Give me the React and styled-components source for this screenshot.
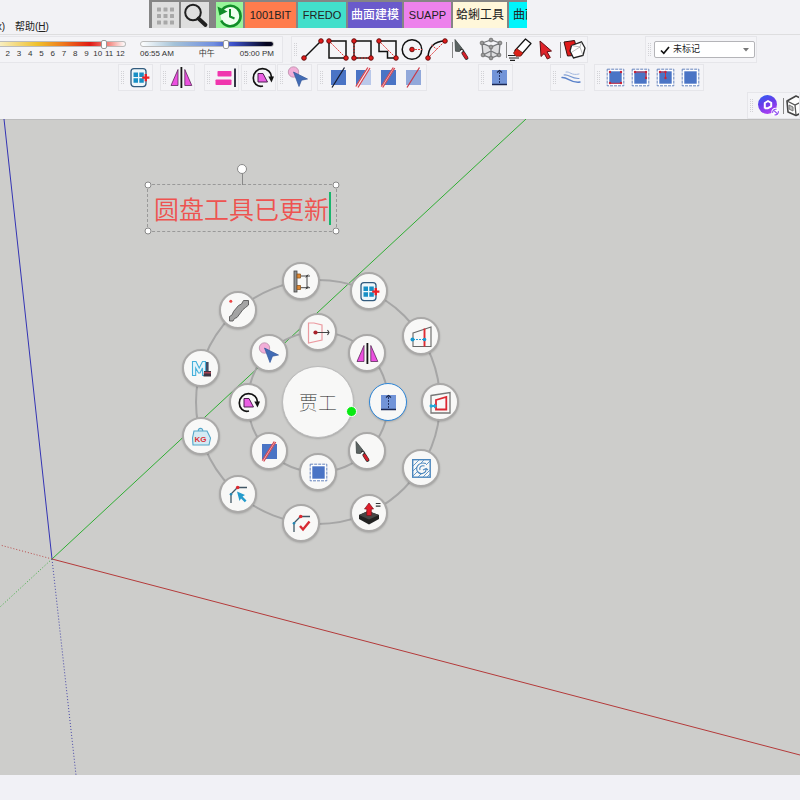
import React from "react";
import styled, { createGlobalStyle, css } from "styled-components";

const GlobalStyle = createGlobalStyle`
  *, *::before, *::after { box-sizing: border-box; }
  html, body { margin: 0; }
  body {
    font-family: "Liberation Sans", "Noto Sans CJK SC", sans-serif;
    color: #222;
    background: #f1f1f5;
    overflow: hidden;
  }
  button, input, select { font: inherit; color: inherit; margin: 0; }
`;

/* ---------- layout ---------- */

const Window = styled.div`
  display: grid;
  grid-template-rows: auto 1fr auto;
  grid-template-columns: minmax(0, 1fr);
  min-height: 100vh;
`;

const Header = styled.header`
  background: #f2f2f5;
  overflow: hidden;
`;

const TitleRow = styled.div`
  display: flex;
  align-items: flex-start;
  height: 35px;
  border-bottom: 1px solid #dededf;
`;

const Menu = styled.nav`
  display: flex;
  width: 149px;
  padding-top: 19px;
`;

const MenuItem = styled.button`
  display: flex;
  justify-content: flex-end;
  width: ${(p) => p.$width};
  margin-right: 10px;
  padding: 0;
  border: 0;
  background: none;
  overflow: hidden;
  white-space: nowrap;
  font-size: 10px;
  line-height: 15px;
`;

const TabStrip = styled.div`
  display: flex;
  gap: 2px;
  width: 378px;
  padding: 2px 0 0 3px;
  background: #858585;
  overflow: hidden;
`;

const Tab = styled.button`
  display: flex;
  flex: none;
  align-items: center;
  justify-content: center;
  width: ${(p) => p.$width}px;
  height: 26px;
  margin-right: ${(p) => p.$after || 0}px;
  padding: 0;
  border: 0;
  background: ${(p) => p.$color};
  color: ${(p) => p.$ink || "#222"};
  font-weight: ${(p) => (p.$ink ? 500 : 400)};
  font-size: ${(p) => (p.$cjk ? 12 : 11)}px;
  line-height: 16px;
  white-space: nowrap;
`;

const ToolRow = styled.div`
  display: flex;
  height: 28px;
  padding-top: 1px;
`;

const Group = styled.div`
  display: flex;
  flex: none;
  align-items: center;
  height: 27px;
  margin-left: ${(p) => p.$gap || 0}px;
  border: 1px solid #e6e6ea;
  background: #f4f4f7;
  ${(p) => p.$docked && css`
    width: 53px;
    margin-left: auto;
    overflow: hidden;
  `}
`;

const Grip = styled.span`
  flex: none;
  width: 4px;
  height: 14px;
  margin: 0 2px;
  background-image: linear-gradient(#d2d2d6 1px, transparent 1px);
  background-size: 100% 2px;
  mask-image: linear-gradient(to right, #000 1px, transparent 1px);
  mask-size: 2px 100%;
`;

const ToolButton = styled.button`
  display: flex;
  flex: none;
  width: 25px;
  height: 25px;
  padding: 0;
  border: 0;
  background: none;
`;

const Divider = styled.span`
  flex: none;
  width: 1px;
  height: 16px;
  margin: 0 1px 0 2px;
  background: #888;
`;

const ShadowGroup = styled(Group)`
  align-items: flex-start;
  width: 283px;
  gap: 14px;
  padding-top: 4px;
  border-left: 0;
`;

const SliderField = styled.label`
  display: flex;
  flex-direction: column;
  gap: 2px;
  width: ${(p) => p.$width}px;
  font-size: 8px;
  line-height: 10px;
`;

const Slider = styled.input`
  appearance: none;
  display: block;
  width: 100%;
  height: 6px;
  border: 1px solid #bbb;
  border-left-width: ${(p) => (p.$open ? 0 : 1)}px;
  border-radius: ${(p) => (p.$open ? "0 3px 3px 0" : "3px")};
  background: linear-gradient(to right, ${(p) => p.$colors});
  &::-webkit-slider-thumb {
    appearance: none;
    width: 6px;
    height: 9px;
    border: 1px solid #999;
    border-radius: 2px;
    background: #fff;
  }
`;

const MonthLabels = styled.span`
  display: grid;
  grid-template-columns: repeat(11, 1fr);
  padding-left: 2px;
  text-align: center;
  white-space: nowrap;
  color: #333;
`;

const TimeLabels = styled.span`
  display: flex;
  justify-content: space-between;
  white-space: nowrap;
  color: #333;
`;

const TagField = styled.label`
  display: flex;
  align-items: center;
  width: 101px;
  height: 17px;
  margin-right: 1px;
  padding: 0 5px;
  border: 1px solid #b4b4b8;
  border-radius: 2px;
  background: #fff;
`;

const TagSelect = styled.select`
  appearance: none;
  flex: 1;
  min-width: 0;
  padding: 0 0 0 3px;
  border: 0;
  background: none;
  font-size: 9px;
  line-height: 15px;
`;

const Viewport = styled.main`
  position: relative;
  overflow: hidden;
  background: #cdcdcb;
  box-shadow: inset 0 1px 0 #bdbdbd;
`;

const Scene = styled.svg`
  position: absolute;
  inset: 0;
  width: 100%;
  height: 100%;
`;

const StatusBar = styled.footer`
  height: 25px;
  background: #f1f1f6;
`;

/* ---------- text annotation ---------- */

const TextBox = styled.div`
  position: absolute;
  left: 147px;
  top: 65px;
  display: flex;
  align-items: center;
  padding: 6px;
  border: 1px dashed #999;
`;

const TextInput = styled.input`
  width: 176px;
  height: 34px;
  padding: 0;
  border: 0;
  outline: 0;
  background: none;
  color: #ee5350;
  font-family: "Noto Sans CJK SC", sans-serif;
  font-weight: 350;
  font-size: 25px;
  line-height: 34px;
`;

const Caret = styled.span`
  position: absolute;
  right: 5px;
  top: 7px;
  width: 2px;
  height: 33px;
  background: #18b56c;
`;

const Knob = styled.span`
  position: absolute;
  left: ${(p) => p.$x};
  top: ${(p) => p.$y};
  width: 7px;
  height: 7px;
  transform: translate(-50%, -50%);
  border: 1px solid #888;
  border-radius: 50%;
  background: #fff;
`;

const RotateKnob = styled(Knob)`
  width: 10px;
  height: 10px;
  &::after {
    content: "";
    position: absolute;
    left: 4px;
    top: 9px;
    width: 1px;
    height: 11px;
    background: #888;
  }
`;

/* ---------- radial menu ---------- */

const Dial = styled.div`
  position: absolute;
  left: 318px;
  top: 283px;
`;

const Ring = styled.span`
  position: absolute;
  width: ${(p) => p.$radius * 2 + 2}px;
  height: ${(p) => p.$radius * 2 + 2}px;
  transform: translate(-50%, -50%);
  border: 2px solid #a6a6a6;
  border-radius: 50%;
`;

const Node = styled.button`
  position: absolute;
  display: flex;
  align-items: center;
  justify-content: center;
  width: 38px;
  height: 38px;
  padding: 0;
  transform: translate(-50%, -50%);
  border: ${(p) => (p.$active ? "1px solid #2d86d8" : "2px solid #aaa9a8")};
  border-radius: 50%;
  background: #f8f8f7;
  box-shadow: 0 1px 2px rgba(0, 0, 0, 0.18);
`;

const Hub = styled(Node)`
  width: 72px;
  height: 72px;
  border: 1px solid #bbb;
  font-family: "Noto Sans CJK SC", sans-serif;
  font-weight: 100;
  font-size: 19px;
  line-height: 28px;
`;

const HubDot = styled.span`
  position: absolute;
  left: 28px;
  top: 4px;
  width: 11px;
  height: 11px;
  border: 1px solid #fff;
  border-radius: 50%;
  background: #08ea12;
`;

/* ---------- icons ---------- */

const Svg = styled.svg`
  display: block;
  flex: none;
  overflow: visible;
`;

const Glyph = ({ children, size = 25, box = 25 }) => (
  <Svg width={size} height={size} viewBox={`0 0 ${box} ${box}`} fill="none" aria-hidden="true">
    {children}
  </Svg>
);

const Dots = ({ points, r = 2.3 }) =>
  points.map(([x, y]) => (
    <circle key={`${x}-${y}`} cx={x} cy={y} r={r} fill="#e01b1b" stroke="#5c0808" strokeWidth="0.9" />
  ));

const dash = { stroke: "#e03a3a", strokeWidth: 1, strokeDasharray: "2 1" };
const ink = { stroke: "#111", strokeWidth: 1.5 };
const BLUE = "#4a74c5";

const icons = {
  line: <><path d="M4 21L21 4" {...ink} /><Dots points={[[4, 21], [21, 4]]} /></>,
  rect: <><path d="M4 4H21V21H4z" {...ink} /><path d="M4 4L21 21" {...dash} /><Dots points={[[4, 4], [21, 21]]} /></>,
  rect3: <><path d="M4 4H21V21" {...ink} /><path d="M4 4V21H21" {...ink} /><path d="M4 4V21H21" {...dash} /><Dots points={[[4, 4], [4, 21], [21, 21]]} /></>,
  poly: <><path d="M4 4H21V21H12.5V14.5H4z" {...ink} /><path d="M4 4L21 21" {...dash} /><Dots points={[[4, 4], [21, 21]]} /></>,
  circle: <><circle cx="12" cy="12.5" r="9.8" {...ink} /><path d="M12 12.5H22" {...dash} /><Dots points={[[12, 12.5]]} /></>,
  arc: <><path d="M3 21C3 11 9 4 20 4" {...ink} /><path d="M3 21L20 4M6.5 8L12 12.5" {...dash} /><Dots points={[[3, 21], [20, 4]]} /></>,
  trowel: (
    <>
      <path d="M1 2.5L8.2 11.5L5.5 14.5L1.5 14.2z" fill="#5c6463" stroke="#3f4544" strokeWidth="0.8" />
      <path d="M6 12.5C9 12 10 13 9.5 15.5" stroke="#333" strokeWidth="1.3" />
      <path d="M9.3 16L12.5 21" stroke="#2b2b2b" strokeWidth="3.8" strokeLinecap="round" />
      <path d="M9.6 16.4L12.3 20.6" stroke="#d2202a" strokeWidth="2.8" strokeLinecap="round" />
    </>
  ),
  cube: (
    <>
      <path d="M3 6L12 10L21 6V18L12 21L3 18z" fill="#dedee0" />
      <path d="M12 3L3 6L12 10L21 6zM3 6L4 18L12 21L20 18L21 6M12 10V21M4 18L12 14L20 18" stroke="#77797c" strokeWidth="1.3" />
      {[[12, 3], [3, 6], [21, 6], [12, 10], [4, 18], [20, 18], [12, 21]].map(([x, y]) => (
        <circle key={`${x}${y}`} cx={x} cy={y} r="1.9" fill="#999" stroke="#666" strokeWidth="0.7" />
      ))}
    </>
  ),
  eraser: (
    <>
      <path d="M17.5 2L23 6.5L13 18L7 13.5z" fill="#fff" stroke="#111" strokeWidth="1.2" strokeLinejoin="round" />
      <path d="M8.6 11.5L15 16L12.5 19.2L8 19.2L5.5 16z" fill="#dd2118" stroke="#5c120c" strokeWidth="0.7" />
      <path d="M0 18.5H7M1 21H11M2 23.4H7" stroke="#222" strokeWidth="1.1" />
    </>
  ),
  arrow: <path d="M7 4L18.5 14L14 14.8L17.3 20.5L14.3 22L11.2 16.5L8 19.5z" fill="#e0232b" stroke="#641014" strokeWidth="1" />,
  box: (
    <>
      <path d="M2 5L12.5 3.5L13.5 7L12 18.5L5.5 19z" fill="#e01a1a" stroke="#39100f" strokeWidth="1" />
      <path d="M9.5 8.5L19.5 4.8L23 11L21 18.5L11.5 21L8 14z" fill="#fff" stroke="#222" strokeWidth="1.3" />
      <path d="M9.5 8.5L18 10L19.5 4.8M18 10L21 18.5M18 10L10 15" stroke="#8d8d8d" strokeWidth="0.6" />
    </>
  ),
  add: (
    <>
      <rect x="4" y="3.6" width="15" height="18" rx="3" fill="#eef7fb" stroke="#315b7e" strokeWidth="1.3" />
      <path d="M6.5 7.5h4.5v4.5H6.5zM12.3 7.5h4.5v4.5h-4.5zM6.5 13.3h4.5v4.5H6.5zM12.3 13.3h4.5v4.5h-4.5z" fill="#178fc5" />
      <path d="M18.8 9v7.2M15.2 12.6H22.4" stroke="#e92127" strokeWidth="2.4" />
    </>
  ),
  mirror: (
    <>
      <path d="M9 4.5V20.5H2zM15.8 4.5V20.5H22.8z" fill="#ec4fe0" stroke="#5b2b59" strokeWidth="0.8" />
      <path d="M12.4 2V23" stroke="#151515" strokeWidth="1.8" />
    </>
  ),
  align: (
    <>
      <rect x="4.5" y="6" width="14" height="5.5" rx="0.8" fill="#f036ae" />
      <rect x="2.5" y="14.5" width="16" height="5.5" rx="0.8" fill="#f036ae" />
      <path d="M22 3.5V22" stroke="#343746" strokeWidth="2" />
    </>
  ),
  rotate: (
    <>
      <path d="M13 21C7 22.5 3.3 18 3.3 13C3.3 7.5 7.5 3.7 12.5 3.7C17.5 3.7 21.5 7.5 21.5 12" stroke="#111" strokeWidth="1.7" />
      <path d="M18.3 11.5H24L21.5 17.5z" fill="#111" />
      <path d="M8 8.5H13L17.5 17H8z" fill="#ea5fe3" stroke="#4b2150" strokeWidth="1" />
    </>
  ),
  pick: (
    <>
      <circle cx="7.5" cy="7" r="5.2" fill="#f2aed8" stroke="#b98ba8" strokeWidth="0.8" />
      <path d="M7.5 7L21.5 14L15.5 15.2L13 21.5z" fill="#416bb5" stroke="#35579a" strokeWidth="0.7" />
    </>
  ),
  cut: <><rect x="5" y="5" width="15" height="15" fill={BLUE} /><path d="M18.5 2.5L6 22.5" stroke="#141a2e" strokeWidth="1.3" /></>,
  cutLeft: (
    <>
      <path d="M5 5H17L7.7 20H5z" fill={BLUE} /><path d="M17 5H20V20H7.7z" fill="#b9c8ea" />
      <path d="M18 2.5L6 22" stroke="#f5e6ec" strokeWidth="3" />
      <path d="M16.8 2.5L4.8 21.5M19 3L7 22.5" stroke="#d8404a" strokeWidth="1.2" />
    </>
  ),
  cutBoth: (
    <>
      <rect x="5" y="5" width="15" height="15" fill={BLUE} />
      <path d="M18 3L6 22" stroke="#e8bcc8" strokeWidth="2" />
      <path d="M17.2 2.5L5.2 21.5M18.8 3L6.8 22.5" stroke="#d5464f" strokeWidth="1.1" />
    </>
  ),
  cutFade: <><rect x="5" y="5" width="15" height="15" fill="#91a8da" /><path d="M18.5 2.5L6 22.5" stroke="#c93847" strokeWidth="1.3" /></>,
  lift: (
    <>
      <rect x="5" y="5" width="15" height="14.5" fill="#7294d8" />
      <path d="M5 19.5H20" stroke="#1b2854" strokeWidth="1.5" />
      <path d="M12.5 18V6" stroke="#243465" strokeDasharray="2 1" />
      <path d="M10 7.5L12.5 5.5L15 7.5" stroke="#182447" strokeWidth="1.1" />
    </>
  ),
  waves: (
    <g strokeLinecap="round">
      <path d="M7 7C11 6 12 11 20 9" stroke="#a4b9df" strokeWidth="1" />
      <path d="M5 10C10 9 12 14 20 13.5" stroke="#7898d2" strokeWidth="1.1" />
      <path d="M3 12.5C9 12 12 18.5 21 17" stroke="#5a82ca" strokeWidth="1.4" />
    </g>
  ),
  area: <><rect x="4.2" y="4.2" width="16.6" height="16.6" fill="#fff" stroke="#6583bd" strokeDasharray="3 1" /><rect x="6.3" y="6.3" width="12.4" height="12.4" fill={BLUE} /></>,
  spark: (
    <>
      <defs>
        <linearGradient id="sparkFill" x1="0" y1="0" x2="0.4" y2="1"><stop offset="0" stopColor="#2b62f5" /><stop offset="0.5" stopColor="#653de9" /><stop offset="1" stopColor="#a63ff2" /></linearGradient>
      </defs>
      <circle cx="11.5" cy="11.5" r="9.5" fill="url(#sparkFill)" />
      <path d="M8.8 15.5V10L12 8L15.2 9.8V13.3L12 15.2H8.8" stroke="#fff" strokeWidth="2" strokeLinejoin="round" />
      <circle cx="19.5" cy="19" r="4.2" fill="#fff" />
      <path d="M16.7 20A3 3 0 0 1 20.5 16.4M22.3 18A3 3 0 0 1 18.5 21.7M17.3 17L21.7 21" stroke="#9354ef" strokeWidth="1.1" />
    </>
  ),
  solid: (
    <>
      <path d="M2 8L11 3L20 7V18L11 22.5L3 19z" fill="#fff" stroke="#444" strokeWidth="1.6" strokeLinejoin="round" />
      <path d="M2 8L10 12L20 7M10 12L11 22" stroke="#555" strokeWidth="1.3" />
      <path d="M4 12L8 14V18L4 16z" stroke="#777" fill="#bbb" />
    </>
  ),
  search: <><circle cx="10" cy="9.5" r="7.8" stroke="#202020" strokeWidth="2" /><path d="M15.5 15.5L22.5 22" stroke="#202020" strokeWidth="3.8" strokeLinecap="round" /></>,
  history: (
    <>
      <circle cx="13" cy="12.5" r="9.5" fill="#f0fff0" />
      <path d="M4.5 8A10.2 10.2 0 1 1 4.2 17.5" stroke="#128d29" strokeWidth="2.6" />
      <path d="M0.5 3.5L2.5 12.5L10.5 8.5z" fill="#128d29" />
      <path d="M13 6V13.5L17.5 15.5" stroke="#128d29" strokeWidth="2" />
    </>
  ),
  apps: <g fill="#a8a8a8">{[0, 1, 2].map((r) => [0, 1, 2].map((c) => <rect key={`${r}${c}`} x={4 + c * 6.5} y={4.5 + r * 6.5} width="4" height="4" rx="0.5" />))}</g>,
  frame: (
    <>
      <path d="M3 5.5L22 2.5V23H3z" stroke="#777" strokeWidth="1.3" />
      <path d="M8 10L18.3 7V19.5H8z" stroke="#dc2832" strokeWidth="1.8" />
      <path d="M2 16H8" stroke="#24a9d8" strokeWidth="2" /><circle cx="3.2" cy="16" r="1.7" fill="#24a9d8" /><path d="M6 13.5L9.2 16L6 18.5z" fill="#24a9d8" />
    </>
  ),
  section: (
    <>
      <path d="M4 9L22 3V22.5H4z" stroke="#666" strokeWidth="1.1" />
      <path d="M15.5 4.5V22.5" stroke="#de2b31" strokeWidth="1.9" />
      <path d="M4 15.5H16" stroke="#2a9fd3" strokeDasharray="2 1" /><circle cx="3.5" cy="15.5" r="2" fill="#1697ce" /><circle cx="15.5" cy="15.5" r="1.8" fill="#1697ce" />
    </>
  ),
  dims: (
    <>
      <rect x="5" y="2" width="3" height="21" fill="#929292" stroke="#444" strokeWidth="0.8" />
      <path d="M8 5h3.5v4H8zM8 16.5h3.5v4H8z" fill="#df8833" stroke="#8b5520" strokeWidth="0.8" />
      <path d="M12 7H21M12 18.7H21M18 6V20M16.8 8.5L19.2 5.5M16.8 20.2L19.2 17.2" stroke="#333" strokeWidth="0.9" />
    </>
  ),
  moulding: (
    <>
      <circle cx="4.8" cy="3.3" r="1.5" fill="#ed4444" />
      <path d="M3.5 18.5V23H7L8.5 20.5L11 19.5L17 11.5L19.5 9.5L22.5 7V2.5H17.5L15.5 6L12.5 7.5L7.5 13.5L6 17z" fill="#a4a4a4" stroke="#575757" strokeWidth="0.9" />
    </>
  ),
  brand: (
    <>
      <path d="M3.5 19.5V5.5H7L10.2 12L13.5 5.5H16.5V19.5H13.5V12L11 17H9.5L6.7 12V19.5z" fill="#e3f4fb" stroke="#45b0da" strokeWidth="1.1" />
      <path d="M18.3 6V15" stroke="#414b64" strokeWidth="2.6" />
      <path d="M15 15H22V20.5H14.5z" fill="#3d3340" /><path d="M15 16.8H22" stroke="#c44858" strokeWidth="1.2" />
    </>
  ),
  weight: (
    <>
      <path d="M5 7H18L21.5 14L20 21H4L3.5 14zM9.5 7C8 3.5 15 3.5 13.5 7" fill="#d4eaf3" stroke="#52a5c8" strokeWidth="1.1" />
      <text x="5.5" y="18" fontSize="8" fontWeight="700" fill="#db3037" fontFamily="Liberation Sans">KG</text>
    </>
  ),
  path: <><path d="M5 21V12L11.5 5.5H21" stroke="#415766" strokeWidth="1.3" /><circle cx="11.7" cy="5.5" r="1.8" fill="#df2a32" /><circle cx="5" cy="12.3" r="1.3" fill="#2187b5" /></>,
  push: (
    <>
      <path d="M2 14L11 10L22 14V18L12 23.5L2 18z" fill="#222" /><path d="M2 14L12 18.5L22 14L11 10z" fill="#454545" />
      <path d="M9.8 14.5V8H7.5L12 2L16.5 8H14.3V14.5z" fill="#df1d2a" stroke="#7b1019" strokeWidth="0.7" />
      <path d="M18.8 2.5H23.5M18.8 5.2H23.5" stroke="#333" strokeWidth="1.2" />
    </>
  ),
  hatch: (
    <>
      <rect x="3.7" y="3.7" width="17.5" height="17.5" stroke="#4a86bd" strokeWidth="1.4" />
      <path d="M4 10L10 4M4 15L8 11M12 7L15 4M4 20L9 15M9 21L12 18M14 21L21 14M17 9L21 5M18 21L21 18" stroke="#6599c9" />
      <path d="M17 7.5C11 5.5 6.5 10 8 14.5C10 19.5 17.5 18 17 12.5L14 14M17 12.5L19 14M15.5 10C12 9 10 11.5 11 14" stroke="#4a86bd" strokeWidth="1.1" />
    </>
  ),
  pull: (
    <>
      <path d="M2.5 3H8L16 5V20L2.5 23z" stroke="#eb9aa0" strokeWidth="1.2" />
      <path d="M9 12.5H23M21.5 10L23 12.5L21.5 15" stroke="#444" strokeWidth="1.1" /><circle cx="9.5" cy="12.5" r="2.1" fill="#a9212b" />
    </>
  ),
};

icons.pathPick = <>{icons.path}<path d="M11 9.5L19 13L16.5 14.5L20.5 18.5L18.8 20.2L15 16.5L13.5 19z" fill="#249bcc" /></>;
icons.pathCheck = <>{icons.path}<path d="M11 15L14 18.5L20.5 10.5" stroke="#d72a32" strokeWidth="2.4" /></>;
icons.areaBottom = <>{icons.area}<path d="M7 18.3H18" stroke="#cb3145" /><Corners at={[[7, 7], [18, 7], [7, 18], [18, 18]]} /></>;
icons.areaTop = <>{icons.area}<path d="M7 7H18V13" stroke="#cb3145" /><Corners at={[[7, 7], [18, 7], [18, 13]]} /></>;
icons.areaMid = <>{icons.area}<path d="M7 7H12.5V13" stroke="#cb3145" /><Corners at={[[7, 7], [12.5, 7], [12.5, 13]]} /></>;

function Corners({ at }) {
  return at.map(([x, y]) => <circle key={`${x}-${y}`} cx={x} cy={y} r="1.2" fill="#c92338" />);
}

/* ---------- data ---------- */

const drawTools = [
  ["line", "直线"], ["rect", "矩形"], ["rect3", "旋转矩形"], ["poly", "多边形"], ["circle", "圆"], ["arc", "圆弧"], null,
  ["trowel", "抹刀"], ["cube", "晶格"], null, ["eraser", "擦除"], ["arrow", "选择"], null, ["box", "组件"],
];

const pluginGroups = [
  { gap: 118, tools: [["add", "添加"]] },
  { gap: 7, tools: [["mirror", "镜像"]] },
  { gap: 9, tools: [["align", "对齐"]] },
  { gap: 2, tools: [["rotate", "旋转"]] },
  { gap: 1, tools: [["pick", "拾取"]] },
  { gap: 5, tools: [["cut", "切割"], ["cutLeft", "单侧切割"], ["cutBoth", "双线切割"], ["cutFade", "淡化切割"]] },
  { gap: 51, tools: [["lift", "升高"]] },
  { gap: 37, tools: [["waves", "曲线"]] },
  { gap: 9, tools: [["areaBottom", "底边"], ["areaTop", "顶边"], ["areaMid", "中点"], ["area", "面域"]] },
];

const innerNodes = [["lift", "升高"], ["mirror", "镜像"], ["pull", "拉伸"], ["pick", "拾取"], ["rotate", "旋转"], ["cutBoth", "切割"], ["area", "面域"], ["trowel", "抹刀"]];
const outerNodes = [
  ["frame", "偏移"], ["section", "剖面"], ["add", "添加"], ["dims", "标注"], ["moulding", "线脚"], ["brand", "材质"],
  ["weight", "重量"], ["pathPick", "选择路径"], ["pathCheck", "确认路径"], ["push", "推拉"], ["hatch", "填充"],
];

const months = [2, 3, 4, 5, 6, 7, 8, 9, 10, 11, 12];

/* ---------- components ---------- */

const Tools = ({ items }) =>
  items.map((item, i) =>
    item ? (
      <ToolButton key={i} aria-label={item[1]}><Glyph>{icons[item[0]]}</Glyph></ToolButton>
    ) : (
      <Divider key={i} />
    )
  );

const Orbit = ({ nodes, radius, active }) => (
  <>
    <Ring $radius={radius} />
    {nodes.map(([icon, label], i) => {
      const angle = (i / nodes.length) * Math.PI * 2;
      return (
        <Node
          key={icon}
          aria-label={label}
          $active={icon === active}
          style={{ left: Math.round(radius * Math.cos(angle)), top: Math.round(-radius * Math.sin(angle)) }}
        >
          <Glyph>{icons[icon]}</Glyph>
        </Node>
      );
    })}
  </>
);

export default function App() {
  return (
    <Window>
      <GlobalStyle />
      <Header>
        <TitleRow>
          <Menu>
            <MenuItem $width="5px">x)</MenuItem>
            <MenuItem $width="auto">帮助(<u>H</u>)</MenuItem>
          </Menu>
          <TabStrip>
            <Tab $width={27} $color="#dedede" aria-label="应用"><Glyph>{icons.apps}</Glyph></Tab>
            <Tab $width={28} $color="#dedede" $after={5} aria-label="搜索"><Glyph>{icons.search}</Glyph></Tab>
            <Tab $width={27} $color="#98f59a" aria-label="历史"><Glyph>{icons.history}</Glyph></Tab>
            <Tab $width={51} $color="#ff7c4d">1001BIT</Tab>
            <Tab $width={48} $color="#42dfcb">FREDO</Tab>
            <Tab $width={54} $color="#6a5acb" $ink="#fff" $cjk>曲面建模</Tab>
            <Tab $width={47} $color="#ed82ec">SUAPP</Tab>
            <Tab $width={54} $color="#fff7da" $cjk>蛤蜊工具</Tab>
            <Tab $width={32} $color="#00f5fb" $cjk>曲面</Tab>
          </TabStrip>
        </TitleRow>

        <ToolRow>
          <ShadowGroup>
            <SliderField $width={126}>
              <Slider type="range" min="1" max="12" step="any" defaultValue="10.3" aria-label="月份" $open
                $colors="#f8eec0, #efc02c 30%, #ee7a1c 50%, #e01a14 72%, #f48f88 88%, #fff" />
              <MonthLabels>{months.map((m) => <span key={m}>{m}</span>)}</MonthLabels>
            </SliderField>
            <SliderField $width={134}>
              <Slider type="range" min="0" max="100" step="any" defaultValue="65" aria-label="时间"
                $colors="#fff, #a5c3d8 25%, #718fe0 55%, #3c50c8 70%, #05051e 95%" />
              <TimeLabels><span>06:55 AM</span><span>中午</span><span>05:00 PM</span></TimeLabels>
            </SliderField>
          </ShadowGroup>
          <Group $gap={8}><Grip /><Tools items={drawTools} /></Group>
          <Group $gap={57}>
            <Grip />
            <TagField>
              <Glyph size={10} box={10}><path d="M1 5.5L3.8 8.3L9 2" stroke="#111" strokeWidth="1.7" /></Glyph>
              <TagSelect aria-label="标记"><option>未标记</option></TagSelect>
              <Glyph size={6} box={6}><path d="M0 1H6L3 4.5z" fill="#777" /></Glyph>
            </TagField>
          </Group>
        </ToolRow>

        <ToolRow>
          {pluginGroups.map((g, i) => (
            <Group key={i} $gap={g.gap}><Grip /><Tools items={g.tools} /></Group>
          ))}
        </ToolRow>

        <ToolRow>
          <Group $docked><Grip /><Tools items={[["spark", "渲染"], null, ["solid", "实体"]]} /></Group>
        </ToolRow>
      </Header>

      <Viewport>
        <Scene fill="none" aria-hidden="true">
          <path d="M52 440L4 0" stroke="#3434b4" />
          <path d="M52 440L526 0" stroke="#2fae33" />
          <path d="M52 440L800 636" stroke="#b43a3a" />
          <path d="M52 440L0 426" stroke="#b84a4a" strokeDasharray="1 2" />
          <path d="M52 440L0 488" stroke="#3aae3d" strokeDasharray="1 2" />
          <path d="M52 440L76 656" stroke="#4646a8" strokeDasharray="1 2" />
        </Scene>

        <TextBox>
          <TextInput aria-label="文字" defaultValue="圆盘工具已更新" />
          <Caret />
          <Knob $x="0%" $y="0%" />
          <Knob $x="100%" $y="0%" />
          <Knob $x="0%" $y="100%" />
          <Knob $x="100%" $y="100%" />
          <RotateKnob $x="50%" $y="-16px" />
        </TextBox>

        <Dial>
          <Orbit nodes={outerNodes} radius={122} />
          <Orbit nodes={innerNodes} radius={70} active="lift" />
          <Hub>贾工</Hub>
          <HubDot />
        </Dial>
      </Viewport>

      <StatusBar />
    </Window>
  );
}
